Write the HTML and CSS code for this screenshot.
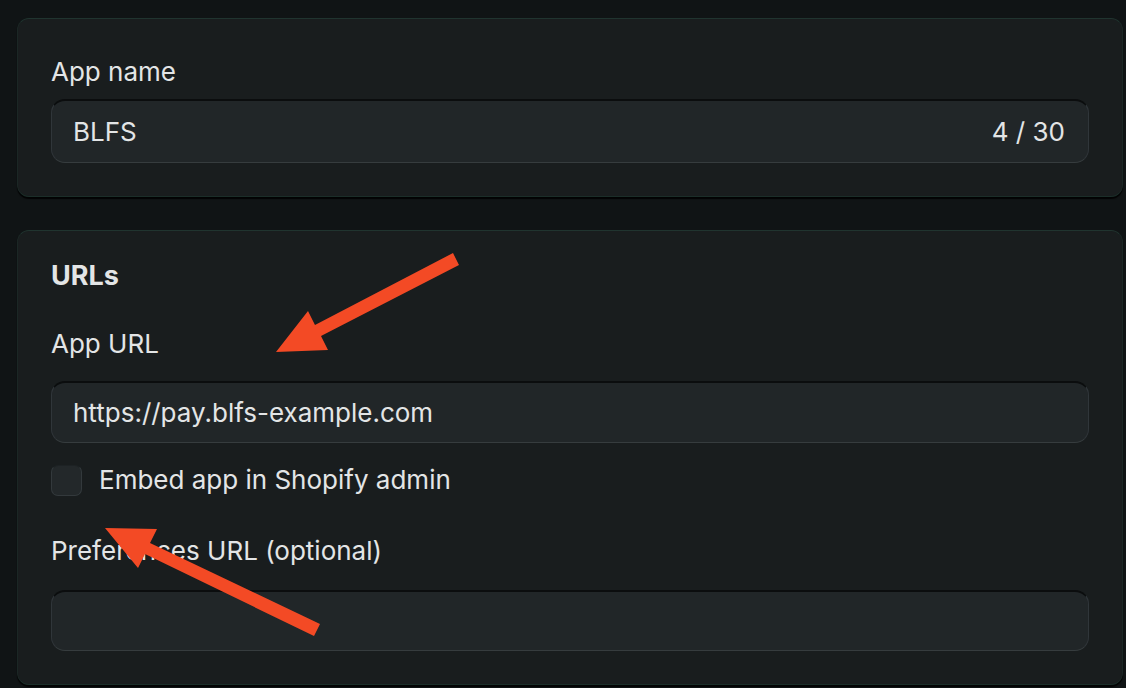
FILE: index.html
```html
<!DOCTYPE html>
<html lang="en">
<head>
<meta charset="utf-8">
<title>App setup</title>
<link rel="stylesheet" href="styles.css">
</head>
<body>
<main class="page">
  <section class="card card-name">
    <label class="field-label label-name">App name</label>
    <div class="input input-name">
      <span class="value">BLFS</span>
      <span class="counter">4 / 30</span>
    </div>
  </section>
  <section class="card card-urls">
    <h2 class="card-title">URLs</h2>
    <label class="field-label label-appurl">App URL</label>
    <div class="input input-appurl">
      <span class="value">https://pay.blfs-example.com</span>
    </div>
    <label class="checkbox-row">
      <span class="checkbox"></span>
      <span class="checkbox-text">Embed app in Shopify admin</span>
    </label>
    <label class="field-label label-pref">Preferences URL (optional)</label>
    <div class="input input-pref"></div>
  </section>
</main>
<svg class="annotations" width="1126" height="688" viewBox="0 0 1126 688" aria-hidden="true">
  <polygon class="arrow" points="453,253 315,325 308,311 276,352 328,350 321,336 459,265"/>
  <polygon class="arrow" points="320,624 150,543 157,529 105,528 138,568 145,554 314,636"/>
</svg>
</body>
</html>
```
FILE: styles.css
```css
* { box-sizing: border-box; }

html, body {
  margin: 0;
  padding: 0;
  background: #101415;
  width: 1126px;
  height: 688px;
  overflow: hidden;
}

body {
  font-family: Inter, "Noto Sans", "Liberation Sans", sans-serif;
  color: #e3e5e6;
  font-size: 26px;
  line-height: 32px;
  position: relative;
}

.page {
  display: flex;
  flex-direction: column;
  gap: 33px;
  padding: 18px 3px 0 17px;
}

.card {
  display: flex;
  flex-direction: column;
  background: #191d1e;
  border: 1px solid #1b2725;
  border-top-color: #20342f;
  border-bottom-color: #1b2e29;
  border-radius: 12px;
  box-shadow: 0 2px 1px rgba(0, 0, 0, 0.85);
  padding: 0 33px;
}

.card-name {
  padding-top: 37px;
  padding-bottom: 33px;
}

.card-urls {
  padding-top: 29px;
  padding-bottom: 33px;
}

.field-label {
  display: block;
  font-weight: 400;
}

.card-title {
  margin: 0;
  font-size: 27px;
  line-height: 32px;
  font-weight: 700;
}

.label-name { margin-bottom: 11px; }
.label-appurl { margin-top: 36px; margin-bottom: 21px; }
.label-pref { margin-top: 40px; margin-bottom: 23px; }

.input {
  display: flex;
  align-items: center;
  justify-content: space-between;
  background: #212628;
  border: 1.5px solid #30363a;
  border-top: 2px solid #0b0d0e;
  border-bottom-color: #363c3e;
  border-radius: 14px;
  padding: 0 23px 0 21px;
}

.input-name { height: 64px; }
.input-appurl { height: 62px; }
.input-pref { height: 61px; }

.checkbox-row {
  display: flex;
  align-items: center;
  gap: 17px;
  margin-top: 22px;
  height: 30px;
}

.checkbox {
  width: 31px;
  height: 31px;
  background: #23282a;
  border: 1.5px solid #33393c;
  border-top-color: #1d2224;
  border-radius: 7px;
  flex: none;
}

.annotations {
  position: absolute;
  left: 0;
  top: 0;
  pointer-events: none;
}

.arrow {
  fill: #f34a25;
}
```
